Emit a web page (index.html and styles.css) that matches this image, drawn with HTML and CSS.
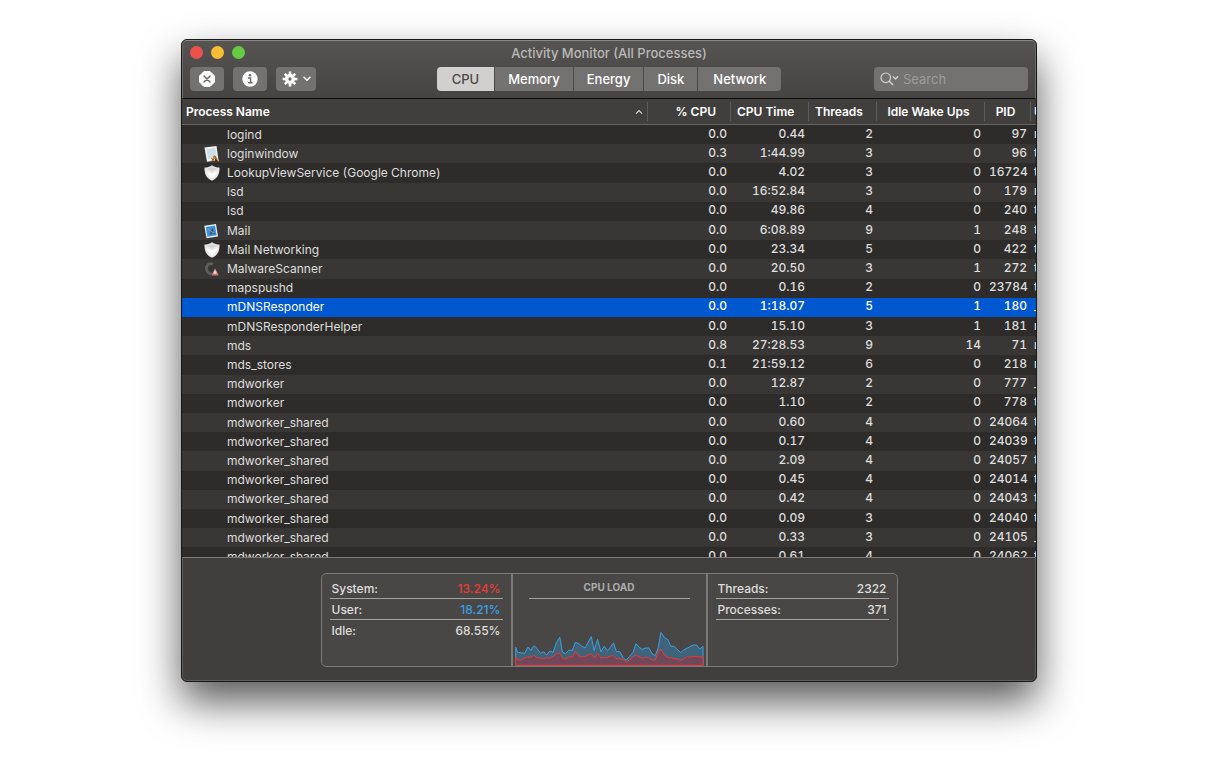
FILE: index.html
```html
<!DOCTYPE html>
<html lang="en">
<head>
  <meta charset="UTF-8">
  <meta name="viewport" content="width=device-width,initial-scale=1">
  <title>Activity Monitor</title>
  <link rel="stylesheet" href="styles.css">
</head>
<body>
  <main class="window">
    <header class="titlebar">
      <div class="title-row">
        <div class="lights">
          <button class="light close" aria-label="Close"></button>
          <button class="light minimize" aria-label="Minimize"></button>
          <button class="light zoom" aria-label="Zoom"></button>
        </div>
        <h1>Activity Monitor (All Processes)</h1>
      </div>
      <div class="toolbar">
        <div class="actions">
          <button class="tool" aria-label="Stop process">
            <svg width="16" height="16" viewBox="0 0 16 16"><path d="M5 .5h6L15.500 5v6L11 15.500H5L.5 11V5z" fill="#fff" stroke="#fff" stroke-linejoin="round"/><path d="M5 5l6 6M11 5l-6 6" stroke="#6b6a69" stroke-width="1.500" stroke-linecap="round"/></svg>
          </button>
          <button class="tool" aria-label="Process info">
            <svg width="16" height="16" viewBox="0 0 16 16"><circle cx="8" cy="8" r="7.700" fill="#fff"/><circle cx="8" cy="4.300" r="1.300" fill="#6b6a69"/><path d="M6 7h2.500v4.500M6 11.800h4.500" fill="none" stroke="#6b6a69" stroke-width="1.500"/></svg>
          </button>
          <button class="tool menu" aria-label="Actions">
            <svg width="16" height="16" viewBox="0 0 16 16"><g stroke="#fff" stroke-width="2.600"><path d="M8 .6v14.800M.6 8h14.800M2.800 2.800l10.400 10.400M13.200 2.800L2.800 13.200"/></g><circle cx="8" cy="8" r="5" fill="#fff"/><circle cx="8" cy="8" r="1.700" fill="#6b6a69"/></svg>
            <svg width="8" height="6" viewBox="0 0 8 6"><path d="M1 1.300l3 3 3-3" fill="none" stroke="#fff" stroke-width="1.500" stroke-linecap="round"/></svg>
          </button>
        </div>
        <nav class="segments">
          <button class="active">CPU</button>
          <button>Memory</button>
          <button>Energy</button>
          <button>Disk</button>
          <button>Network</button>
        </nav>
        <label class="search">
          <svg width="20" height="14" viewBox="0 0 20 14"><circle cx="5.800" cy="5.800" r="4.800" fill="none" stroke="#d4d3d2" stroke-width="1.200"/><path d="M9.300 9.300l3.500 3.500" stroke="#d4d3d2" stroke-width="1.400" stroke-linecap="round"/><path d="M13.300 4.700l2.200 2.200 2.200-2.200" fill="none" stroke="#d4d3d2" stroke-width="1.400" stroke-linecap="round"/></svg>
          <input type="search" placeholder="Search" aria-label="Search">
        </label>
      </div>
    </header>

    <div class="process-list">
      <table>
        <colgroup>
          <col>
          <col class="col-cpu">
          <col class="col-time">
          <col class="col-threads">
          <col class="col-idle">
          <col class="col-pid">
          <col class="col-user">
        </colgroup>
        <thead>
          <tr>
            <th class="name"><div><span>Process Name</span><svg width="8" height="6" viewBox="0 0 8 6"><path d="M1 4.700l3-3 3 3" fill="none" stroke="#dddcdb" stroke-width="1.200"/></svg></div></th>
            <th class="cpu"><div>% CPU</div></th>
            <th class="left"><div>CPU Time</div></th>
            <th class="left"><div>Threads</div></th>
            <th class="idle"><div>Idle Wake Ups</div></th>
            <th class="pid"><div>PID</div></th>
            <th class="user"><div>U</div></th>
          </tr>
        </thead>
        <tbody>
          <tr><td>logind</td><td>0.0</td><td>0.44</td><td>2</td><td>0</td><td>97</td><td>r</td></tr>
          <tr><td><svg class="icon" width="16" height="16" viewBox="0 0 16 16"><path d="M.5 1.500L12.500 0l2 14L3 15.800z" fill="#f4f6f7"/><path d="M2.500 3l9-1.200 1.500 10.200-9 1.300z" fill="#cfdde4"/><path d="M7 15.500l3-6 1.500.5 3.500 5.500-3-1-1.500-2-1.500 3z" fill="#a7642b"/><path d="M7 12.500l4-.5M13 13l2 2" stroke="#d9a24c" stroke-width="1.200"/><path d="M11 13.500l2 1.500" stroke="#4a261b" stroke-width="1.300"/></svg>loginwindow</td><td>0.3</td><td>1:44.99</td><td>3</td><td>0</td><td>96</td><td>t</td></tr>
          <tr><td><svg class="icon" width="16" height="16" viewBox="0 0 16 16"><path d="M8 .3C10 2 13 2.500 15.500 2.600 15.700 9 13.500 13.500 8 15.800 2.500 13.500.3 9 .5 2.600 3 2.500 6 2 8 .3z" fill="#e9e9e9"/><path d="M8 1.800l5.500 2L8 6.500l-5.500-2.700z" fill="#d5d5d5"/><path d="M3 6l5 2.500L13 6c-.5 3.500-2 6-5 7.800C5 12 3.500 9.500 3 6z" fill="#fff"/></svg>LookupViewService (Google Chrome)</td><td>0.0</td><td>4.02</td><td>3</td><td>0</td><td>16724</td><td>t</td></tr>
          <tr><td>lsd</td><td>0.0</td><td>16:52.84</td><td>3</td><td>0</td><td>179</td><td>r</td></tr>
          <tr><td>lsd</td><td>0.0</td><td>49.86</td><td>4</td><td>0</td><td>240</td><td>t</td></tr>
          <tr><td><svg class="icon" width="16" height="16" viewBox="0 0 16 16"><path d="M.3 2.800L12 1l2 12.500L2.500 15.300z" fill="#e8eef2"/><path d="M1.800 3.900L11 2.500l1.600 9.800-9.200 1.400z" fill="#3f8fdd"/><path d="M4 6l3 1.500L9 5l.5 4 2.500 2.500-3.500-1L6 12l.5-3z" fill="#2b5676"/><path d="M4 6l4 3 2 1" fill="none" stroke="#a9a68e"/></svg>Mail</td><td>0.0</td><td>6:08.89</td><td>9</td><td>1</td><td>248</td><td>t</td></tr>
          <tr><td><svg class="icon" width="16" height="16" viewBox="0 0 16 16"><path d="M8 .3C10 2 13 2.500 15.500 2.600 15.700 9 13.500 13.500 8 15.800 2.500 13.500.3 9 .5 2.600 3 2.500 6 2 8 .3z" fill="#e9e9e9"/><path d="M8 1.800l5.500 2L8 6.500l-5.500-2.700z" fill="#d5d5d5"/><path d="M3 6l5 2.500L13 6c-.5 3.500-2 6-5 7.800C5 12 3.500 9.500 3 6z" fill="#fff"/></svg>Mail Networking</td><td>0.0</td><td>23.34</td><td>5</td><td>0</td><td>422</td><td>t</td></tr>
          <tr><td><svg class="icon" width="16" height="16" viewBox="0 0 16 16"><path d="M9 3.200C5 1.500 2 4.500 2.500 8c.3 3 3 5.500 6 5" fill="none" stroke="#5f5e5e" stroke-width="2.800"/><path d="M11 7.500l3.500 6.500H7.800z" fill="#e2a39a"/><path d="M8 12.500h6v2H8z" fill="#c97568"/><path d="M11 10v3" stroke="#fff"/></svg>MalwareScanner</td><td>0.0</td><td>20.50</td><td>3</td><td>1</td><td>272</td><td>t</td></tr>
          <tr><td>mapspushd</td><td>0.0</td><td>0.16</td><td>2</td><td>0</td><td>23784</td><td>t</td></tr>
          <tr class="selected"><td>mDNSResponder</td><td>0.0</td><td>1:18.07</td><td>5</td><td>1</td><td>180</td><td>_</td></tr>
          <tr><td>mDNSResponderHelper</td><td>0.0</td><td>15.10</td><td>3</td><td>1</td><td>181</td><td>r</td></tr>
          <tr><td>mds</td><td>0.8</td><td>27:28.53</td><td>9</td><td>14</td><td>71</td><td>r</td></tr>
          <tr><td>mds_stores</td><td>0.1</td><td>21:59.12</td><td>6</td><td>0</td><td>218</td><td>r</td></tr>
          <tr><td>mdworker</td><td>0.0</td><td>12.87</td><td>2</td><td>0</td><td>777</td><td>_</td></tr>
          <tr><td>mdworker</td><td>0.0</td><td>1.10</td><td>2</td><td>0</td><td>778</td><td>t</td></tr>
          <tr><td>mdworker_shared</td><td>0.0</td><td>0.60</td><td>4</td><td>0</td><td>24064</td><td>t</td></tr>
          <tr><td>mdworker_shared</td><td>0.0</td><td>0.17</td><td>4</td><td>0</td><td>24039</td><td>t</td></tr>
          <tr><td>mdworker_shared</td><td>0.0</td><td>2.09</td><td>4</td><td>0</td><td>24057</td><td>t</td></tr>
          <tr><td>mdworker_shared</td><td>0.0</td><td>0.45</td><td>4</td><td>0</td><td>24014</td><td>t</td></tr>
          <tr><td>mdworker_shared</td><td>0.0</td><td>0.42</td><td>4</td><td>0</td><td>24043</td><td>t</td></tr>
          <tr><td>mdworker_shared</td><td>0.0</td><td>0.09</td><td>3</td><td>0</td><td>24040</td><td>t</td></tr>
          <tr><td>mdworker_shared</td><td>0.0</td><td>0.33</td><td>3</td><td>0</td><td>24105</td><td>_</td></tr>
          <tr><td>mdworker_shared</td><td>0.0</td><td>0.61</td><td>4</td><td>0</td><td>24062</td><td>t</td></tr>
        </tbody>
      </table>
    </div>

    <footer class="summary">
      <div class="panel">
        <dl class="stats">
          <div><dt>System:</dt><dd class="system">13.24%</dd></div>
          <div><dt>User:</dt><dd class="user-load">18.21%</dd></div>
          <div class="last"><dt>Idle:</dt><dd>68.55%</dd></div>
        </dl>
        <section class="load">
          <h2>CPU LOAD</h2>
          <svg class="chart" viewBox="29 195 570 108" preserveAspectRatio="none" aria-hidden="true">
            <path class="user-area" d="M31 301V247L37 262 58 265 68 246 77 256 86 242 96 251 106 265 115 260 124 270 134 258 144 262 154 232 164 217 172 261 181 266 191 256 202 256 211 232 221 236 230 243 240 249 249 233 259 215 268 256 278 223 288 260 298 244 308 257 317 246 326 234 335 260 345 260 355 277 364 286 374 275 385 262 394 236 404 247 413 253 423 249 433 249 443 267 452 272 461 248 469 202 480 218 490 224 499 244 509 244 519 254 529 263 538 254 548 250 558 244 567 240 577 240 586 252 596 244V301z"/>
            <path class="system-area" d="M31 301V276L38 285 47 286 57 279 67 276 77 277 86 271 96 279 106 279 115 281 124 278 135 279 144 275 154 267 164 264 173 280 182 282 191 276 202 276 211 259 221 272 230 276 240 274 249 271 259 266 269 279 278 266 288 279 298 277 307 278 317 273 326 272 335 282 345 281 355 284 364 291 374 286 384 276 394 270 404 276 414 280 424 276 433 279 443 285 452 285 461 261 469 252 480 270 490 278 500 278 509 281 519 282 529 287 538 281 548 275 558 276 567 274 577 275 586 276 596 276V301z"/>
          </svg>
        </section>
        <dl class="stats">
          <div><dt>Threads:</dt><dd>2322</dd></div>
          <div><dt>Processes:</dt><dd>371</dd></div>
        </dl>
      </div>
    </footer>
  </main>
</body>
</html>
```
FILE: styles.css
```css
:root { --window-bg: #403f3d; --row-even: #383736; --row-odd: #2d2c2b; --control: #737271; --line: #7b7a78; --selected: #0058d0; --text: #dfdedd; }
* { box-sizing: border-box; }
body { margin: 0; height: 100vh; padding: 39px 179px 78px 181px; display: flex; background: #fff; color: var(--text); font-family: Inter, "Liberation Sans", sans-serif; font-size: 12px; }
button, input { font: inherit; color: inherit; border: 0; padding: 0; margin: 0; }
svg { display: block; flex: none; }

.window { flex: 1; min-width: 0; display: flex; flex-direction: column; overflow: hidden; background: var(--window-bg); border: 1px solid #171716; border-radius: 6px; box-shadow: inset 0 0 0 1px #5f5e5c, 0 20px 40px rgba(0, 0, 0, 0.65); }

/* Title bar */
.titlebar { flex: none; height: 59px; padding: 0 7px; background: linear-gradient(#555452, #454442); border: 1px solid #6b6a68; border-top-color: #8b8a88; border-bottom: 1px solid #0c0c0c; border-radius: 5px 5px 0 0; }
.title-row { display: grid; grid-template-columns: 1fr auto 1fr; align-items: center; height: 23px; }
.lights { display: flex; gap: 8px; }
.light { width: 13px; height: 13px; border-radius: 50%; }
.close { background: #ec524b; }
.minimize { background: #f8bd32; }
.zoom { background: #66cb42; }
h1 { margin: 0; font-size: 13px; font-weight: 500; color: #bab9b8; }
.toolbar { display: grid; grid-template-columns: 1fr auto 1fr; align-items: center; margin-top: 3px; }
.actions { display: flex; gap: 9px; }
.tool { width: 34px; height: 24px; display: flex; align-items: center; justify-content: center; background: var(--control); border-radius: 4px; }
.menu { width: 40px; gap: 5px; }
.segments { display: flex; gap: 1px; border-radius: 4px; overflow: hidden; }
.segments button { height: 24px; padding: 0 13px; font-size: 13px; font-weight: 500; color: #fff; background: var(--control); }
.segments button:first-child, .segments button:last-child { padding: 0 15px; }
.segments .active { background: #d1d0cf; color: #484746; }
.search { justify-self: end; width: 154px; height: 24px; padding: 0 6px; display: flex; align-items: center; gap: 3px; background: var(--control); border-radius: 4px; }
.search input { flex: 1; min-width: 0; background: none; outline: none; font-size: 13px; }
.search input::placeholder { color: #9d9c9b; opacity: 1; }

/* Process table */
.process-list { flex: 1; min-height: 0; overflow: hidden; }
table { width: 100%; height: 468px; table-layout: fixed; border-collapse: separate; border-spacing: 0; }
.col-cpu { width: 83px; }
.col-time { width: 78px; }
.col-threads { width: 68px; }
.col-idle { width: 108px; }
.col-pid { width: 46px; }
.col-user { width: 5px; }
th { height: 26px; padding: 0; background: var(--window-bg); border-bottom: 1px solid #656462; color: #fff; font-size: 12px; font-weight: 600; white-space: nowrap; overflow: hidden; }
th div { height: 19px; display: flex; align-items: center; justify-content: center; border-right: 1px solid #5c5b59; }
.name div { justify-content: space-between; padding: 0 4px; }
.cpu div { justify-content: flex-end; padding-right: 14px; }
.left div { justify-content: flex-start; padding-left: 6px; }
.idle div, .pid div { padding-right: 4px; }
.user div { justify-content: flex-start; padding-left: 3px; border: 0; }
td { height: 19px; padding: 0 4px 2px; line-height: 16px; font-weight: 500; text-align: right; font-variant-numeric: tabular-nums; white-space: nowrap; overflow: hidden; background: var(--row-odd); }
td:first-child { padding: 0 0 0 45px; text-align: left; font-weight: 400; }
td:last-child { padding: 0 0 2px 3px; text-align: left; }
tr:nth-child(even) td { background: var(--row-even); }
tr.selected td { background: var(--selected); color: #fff; }
.icon { float: left; margin-left: -23px; }

/* Summary */
.summary { flex: none; padding: 15px 0 14px; display: flex; justify-content: center; border-top: 1px solid #7b7a78; margin: 0 1px; }
.panel { display: flex; height: 94px; background: #484745; border: 1px solid var(--line); border-radius: 5px; font-weight: 500; }
.stats { width: 189px; margin: 0; padding: 4px 8px; }
.stats div { display: flex; align-items: center; justify-content: space-between; height: 21px; padding: 0 2px; border-bottom: 1px solid #a3a2a0; }
.stats .last { border: 0; }
.stats dd { margin: 0; }
.stats .system { color: #ec3a33; }
.stats .user-load { color: #3b9fe6; }
.load { width: 197px; display: flex; flex-direction: column; justify-content: space-between; border: 2px solid var(--line); border-width: 0 2px; padding: 4px 2px 0; }
h2 { margin: 0 14px; height: 21px; line-height: 18px; font-size: 10px; font-weight: 700; text-align: center; color: #adacab; border-bottom: 1px solid #a3a2a0; }
.chart { width: 100%; height: 36px; }
.chart path { stroke-width: 3; stroke-linejoin: round; }
.user-area { fill: #3f6378; stroke: #3d9fe3; }
.system-area { fill: #71485a; stroke: #ea3a37; }
```
